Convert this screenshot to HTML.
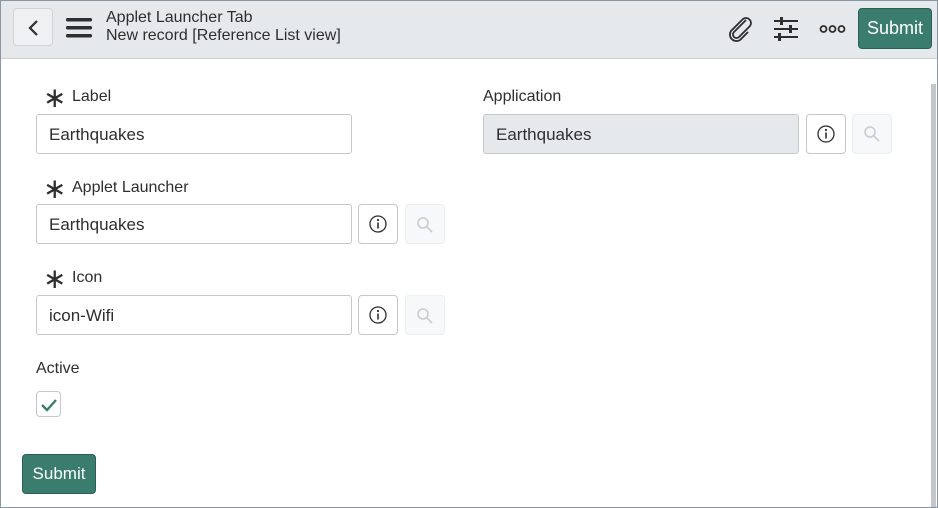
<!DOCTYPE html>
<html><head><style>
*{box-sizing:border-box}
body{margin:0;width:938px;height:508px;overflow:hidden;font-family:"Liberation Sans",sans-serif;background:#fff;position:relative;color:#2e2e2e}
.frame{position:absolute;inset:0;border:1px solid #8a97a3;pointer-events:none}
.hdr{position:absolute;left:0;top:0;width:938px;height:59px;background:#e6e9ec;border-bottom:1px solid #c9ced3}
.back{position:absolute;left:13px;top:8px;width:40px;height:38px;border:1px solid #cfd3d7;border-radius:4px;background:#eef0f2}
.t1{position:absolute;left:106px;top:9px;font-size:16px;color:#2e2e2e}
.t2{position:absolute;left:106px;top:27px;font-size:16px;color:#2e2e2e}
.btn{position:absolute;background:#3a7d6e;border:1px solid #2a5f53;border-radius:4px;color:#fff;font-size:17px;text-align:center}
.lbl{position:absolute;font-size:16px;color:#2e2e2e}
.inp{position:absolute;height:40px;border:1px solid #c4c8cc;border-radius:3px;font-size:17px;padding:10px 12px;background:#fff}
.ib{position:absolute;width:40px;height:40px;border:1px solid #c4c8cc;border-radius:4px;background:#fff}
.sb{position:absolute;width:40px;height:40px;border:1px solid #eceef0;border-radius:4px;background:#f7f8f9}
.star{font-size:28px;position:absolute;left:-29px;top:-7px;font-weight:normal}
</style></head><body>
<div class="hdr">
<div class="back"><svg width="40" height="38"><path d="M23 12 L16 19 L23 26" stroke="#2e2e2e" stroke-width="2.2" fill="none"/></svg></div>
<svg style="position:absolute;left:66px;top:17px" width="28" height="22"><rect x="0" y="1" width="26" height="3.5" rx="1.5" fill="#2e2e2e"/><rect x="0" y="9" width="26" height="3.5" rx="1.5" fill="#2e2e2e"/><rect x="0" y="17" width="26" height="3.5" rx="1.5" fill="#2e2e2e"/></svg>
<div class="t1">Applet Launcher Tab</div>
<div class="t2">New record [Reference List view]</div>
<svg style="position:absolute;left:726px;top:14px" width="30" height="30"><path d="M20 6 L8 18 a3.5 3.5 0 0 0 5 5 L24 12 a5 5 0 0 0 -7 -7 L5 17 a6.5 6.5 0 0 0 9 9 L22 18" stroke="#2e2e2e" stroke-width="1.8" fill="none"/></svg>
<svg style="position:absolute;left:772px;top:16px" width="28" height="28"><g stroke="#2e2e2e" stroke-width="2"><line x1="2" y1="5" x2="26" y2="5"/><line x1="2" y1="13" x2="26" y2="13"/><line x1="2" y1="21" x2="26" y2="21"/></g><g fill="#2e2e2e"><rect x="8" y="1" width="3" height="8"/><rect x="17" y="9" width="3" height="8"/><rect x="6" y="17" width="3" height="8"/></g></svg>
<svg style="position:absolute;left:819px;top:23px" width="28" height="12"><g stroke="#2e2e2e" stroke-width="1.8" fill="none"><circle cx="4.5" cy="6" r="3"/><circle cx="13.5" cy="6" r="3"/><circle cx="22.5" cy="6" r="3"/></g></svg>
<div class="btn" style="left:858px;top:8px;width:74px;height:41px;line-height:39px;font-size:18px">Submit</div>
</div>
<div style="position:absolute;left:931px;top:84px;width:5px;height:424px;background:#c4c6c8"></div>

<div class="lbl" style="left:72px;top:88px"><span class="star">∗</span>Label</div>
<div class="inp" style="left:36px;top:114px;width:316px">Earthquakes</div>
<div class="lbl" style="left:483px;top:88px">Application</div>
<div class="inp" style="left:483px;top:114px;width:316px;background:#e6e9ec">Earthquakes</div>
<div class="ib" style="left:806px;top:114px"></div><div class="sb" style="left:852px;top:114px"></div>

<div class="lbl" style="left:72px;top:179px"><span class="star">∗</span>Applet Launcher</div>
<div class="inp" style="left:36px;top:204px;width:316px">Earthquakes</div>
<div class="ib" style="left:358px;top:204px"></div><div class="sb" style="left:405px;top:204px"></div>

<div class="lbl" style="left:72px;top:269px"><span class="star">∗</span>Icon</div>
<div class="inp" style="left:36px;top:295px;width:316px">icon-Wifi</div>
<div class="ib" style="left:358px;top:295px"></div><div class="sb" style="left:405px;top:295px"></div>

<svg style="position:absolute;left:0;top:0" width="938" height="508">
<g fill="none" stroke="#2e2e2e" stroke-width="1.3">
<circle cx="826" cy="134" r="8"/><circle cx="378" cy="224" r="8"/><circle cx="378" cy="315" r="8"/></g>
<g fill="#2e2e2e"><circle cx="826" cy="130" r="1.1"/><rect x="825.2" y="132.5" width="1.6" height="6"/>
<circle cx="378" cy="220" r="1.1"/><rect x="377.2" y="222.5" width="1.6" height="6"/>
<circle cx="378" cy="311" r="1.1"/><rect x="377.2" y="313.5" width="1.6" height="6"/></g>
<g fill="none" stroke="#c9cdd1" stroke-width="1.6">
<circle cx="870" cy="132" r="5"/><line x1="874" y1="136" x2="879" y2="141"/>
<circle cx="423" cy="223" r="5"/><line x1="427" y1="227" x2="432" y2="232"/>
<circle cx="423" cy="314" r="5"/><line x1="427" y1="318" x2="432" y2="323"/></g>
</svg>

<div class="lbl" style="left:36px;top:360px">Active</div>
<div style="position:absolute;left:36px;top:391px;width:25px;height:26px;border:1px solid #c4c8cc;border-radius:4px"><svg width="25" height="26"><path d="M5 13 L10 18 L19 8" stroke="#3a7d6e" stroke-width="2.4" fill="none"/></svg></div>
<div class="btn" style="left:22px;top:454px;width:74px;height:40px;line-height:38px">Submit</div>
<div class="frame"></div>
</body></html>
